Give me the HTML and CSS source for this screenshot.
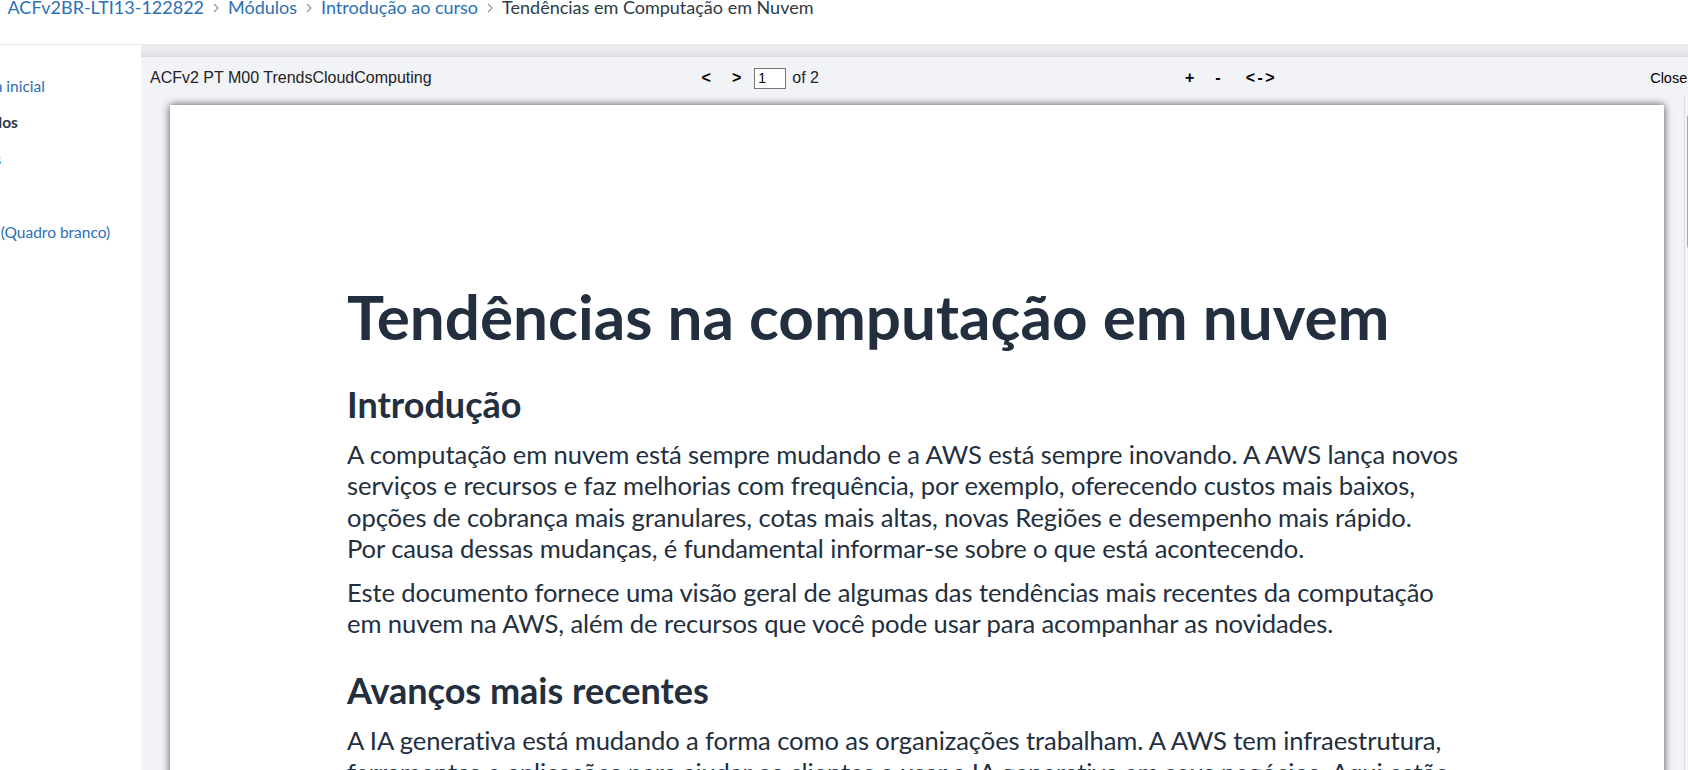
FILE: index.html
```html
<!DOCTYPE html>
<html lang="pt-BR">
<head>
<meta charset="utf-8">
<title>Tendências em Computação em Nuvem</title>
<link rel="stylesheet" href="styles.css">
</head>
<body>
<header class="crumbs">
  <nav class="crumb-row">
    <a class="crumb-link" href="#">ACFv2BR-LTI13-122822</a>
    <svg class="crumb-sep" viewBox="0 0 6 10" width="6" height="10"><path d="M1 1l4 4-4 4" fill="none" stroke="#8b969e" stroke-width="1.2"/></svg>
    <a class="crumb-link" href="#">Módulos</a>
    <svg class="crumb-sep" viewBox="0 0 6 10" width="6" height="10"><path d="M1 1l4 4-4 4" fill="none" stroke="#8b969e" stroke-width="1.2"/></svg>
    <a class="crumb-link" href="#">Introdução ao curso</a>
    <svg class="crumb-sep" viewBox="0 0 6 10" width="6" height="10"><path d="M1 1l4 4-4 4" fill="none" stroke="#8b969e" stroke-width="1.2"/></svg>
    <span class="crumb-current">Tendências em Computação em Nuvem</span>
  </nav>
</header>
<div class="main">
  <nav class="sidenav">
    <ul class="side-list">
      <li><a class="side-link" href="#">Página inicial</a></li>
      <li><a class="side-link active" href="#">Módulos</a></li>
      <li><a class="side-link" href="#">Avisos</a></li>
      <li><a class="side-link" href="#">Notas</a></li>
      <li><a class="side-link" href="#">Lousa (Quadro branco)</a></li>
    </ul>
  </nav>
  <section class="viewer">
    <div class="viewer-shade"></div>
    <div class="toolbar">
      <span class="tb-title">ACFv2 PT M00 TrendsCloudComputing</span>
      <div class="tb-nav">
        <button class="tb-btn">&lt;</button>
        <button class="tb-btn">&gt;</button>
        <input class="tb-page" type="text" value="1">
        <span class="tb-of">of 2</span>
      </div>
      <div class="tb-zoom">
        <button class="tb-btn">+</button>
        <button class="tb-btn">-</button>
        <button class="tb-btn tb-fit">&lt;-&gt;</button>
      </div>
      <button class="tb-close">Close</button>
    </div>
    <div class="stage">
      <article class="page">
        <h1 class="doc-title">Tendências na computação em nuvem</h1>
        <h2 class="doc-h2">Introdução</h2>
        <p class="doc-p">A computação em nuvem está sempre mudando e a AWS está sempre inovando. A AWS lança novos<br>serviços e recursos e faz melhorias com frequência, por exemplo, oferecendo custos mais baixos,<br>opções de cobrança mais granulares, cotas mais altas, novas Regiões e desempenho mais rápido.<br>Por causa dessas mudanças, é fundamental informar-se sobre o que está acontecendo.</p>
        <p class="doc-p">Este documento fornece uma visão geral de algumas das tendências mais recentes da computação<br>em nuvem na AWS, além de recursos que você pode usar para acompanhar as novidades.</p>
        <h2 class="doc-h2">Avanços mais recentes</h2>
        <p class="doc-p">A IA generativa está mudando a forma como as organizações trabalham. A AWS tem infraestrutura,<br>ferramentas e aplicações para ajudar os clientes a usar a IA generativa em seus negócios. Aqui estão</p>
      </article>
      <div class="vscroll"><div class="vscroll-arrow"></div><div class="vscroll-thumb"></div></div>
    </div>
  </section>
</div>
</body>
</html>
```
FILE: styles.css
```css
html, body {
  margin: 0;
  padding: 0;
}
body {
  width: 1688px;
  height: 770px;
  overflow: hidden;
  background: #fff;
  font-family: Lato, "Liberation Sans", sans-serif;
}
a { text-decoration: none; }

/* breadcrumbs */
.crumbs {
  height: 44px;
  border-bottom: 1px solid #e6e7e9;
  overflow: hidden;
}
.crumb-row {
  display: flex;
  align-items: center;
  margin-top: -4px;
  padding-left: 7.5px;
  font-size: 18px;
  line-height: 22px;
  white-space: nowrap;
}
.crumb-link { color: #2b6fb6; }
.crumb-current { color: #2d3b45; }
.crumb-sep { margin: 2px 9px 0 9px; flex: none; }

/* layout */
.main {
  display: flex;
  height: 725px;
}
.sidenav {
  width: 141px;
  flex: none;
  overflow: hidden;
  background: #fff;
}
.side-list {
  list-style: none;
  margin: 0 0 0 -42.5px;
  padding: 22.6px 0 0 0;
  white-space: nowrap;
}
.side-list li {
  font-size: 15.5px;
  line-height: 36.6px;
}
.side-link { color: #2b6fb6; }
.side-link.active { color: #2d3b45; font-weight: 700; }

/* viewer */
.viewer {
  flex: 1;
  min-width: 0;
  background: #f2f3f7;
  overflow: hidden;
  display: flex;
  flex-direction: column;
}
.viewer-shade {
  height: 12px;
  flex: none;
  background: linear-gradient(to bottom, #eeeff2 0%, #e9eaed 50%, #dcdde1 100%);
}
.toolbar {
  height: 38px;
  padding-top: 2px;
  flex: none;
  display: flex;
  align-items: center;
  font-family: "Liberation Sans", Arial, sans-serif;
  font-size: 16px;
  color: #222;
  white-space: nowrap;
}
.tb-title { margin-left: 9px; }
.tb-nav {
  display: flex;
  align-items: center;
  margin-left: 270px;
}
.tb-zoom {
  display: flex;
  align-items: center;
  margin-left: 366px;
}
.tb-btn {
  font-family: "Liberation Sans", Arial, sans-serif;
  font-size: 16px;
  font-weight: 700;
  color: #000;
  background: none;
  border: 0;
  padding: 0;
  line-height: 20px;
}
.tb-btn + .tb-btn { margin-left: 21px; }
.tb-zoom .tb-fit { margin-left: 25px; letter-spacing: 2.5px; }
.tb-page {
  margin-left: 13px;
  width: 32px;
  height: 21px;
  box-sizing: border-box;
  border: 1px solid #767676;
  padding: 0 3px;
  font-family: "Liberation Sans", Arial, sans-serif;
  font-size: 14px;
  color: #000;
  background: #fff;
}
.tb-of { margin-left: 6px; color: #222; }
.tb-close {
  margin-left: 373px;
  font-family: "Liberation Sans", Arial, sans-serif;
  font-size: 14.5px;
  color: #000;
  background: none;
  border: 0;
  padding: 0;
}

.stage {
  flex: 1;
  display: flex;
  align-items: flex-start;
  min-height: 0;
}
.page {
  flex: none;
  width: 1494px;
  height: 1200px;
  box-sizing: border-box;
  margin: 8px 0 0 29px;
  padding: 173px 0 0 177px;
  background: #fff;
  box-shadow: 0 0 8px rgba(0, 0, 0, 0.7);
  color: #232f3e;
  font-family: Lato, "Liberation Sans", sans-serif;
  white-space: nowrap;
}
.doc-title {
  margin: 0 0 -1px;
  font-size: 62px;
  font-weight: 700;
  line-height: 76px;
}
.doc-h2 {
  margin: 29px 0 13px;
  font-size: 36px;
  font-weight: 700;
  line-height: 44px;
}
.doc-p {
  margin: 0 0 12.5px;
  font-size: 25.6px;
  font-weight: 400;
  line-height: 31.3px;
  letter-spacing: -0.1px;
}

.vscroll {
  flex: none;
  width: 17px;
  height: 700px;
  margin-left: 20px;
  margin-top: -2px;
  box-sizing: border-box;
  border-left: 1px solid #dcdde1;
  background: #f4f4f6;
  padding-left: 2px;
}
.vscroll-arrow {
  width: 0;
  height: 0;
  margin: 4px 0 0 2px;
  border-left: 4px solid transparent;
  border-right: 4px solid transparent;
  border-bottom: 5px solid #777;
}
.vscroll-thumb {
  margin-top: 11px;
  width: 10px;
  height: 133px;
  background: #a9a9ac;
  border-radius: 2px;
}
```
